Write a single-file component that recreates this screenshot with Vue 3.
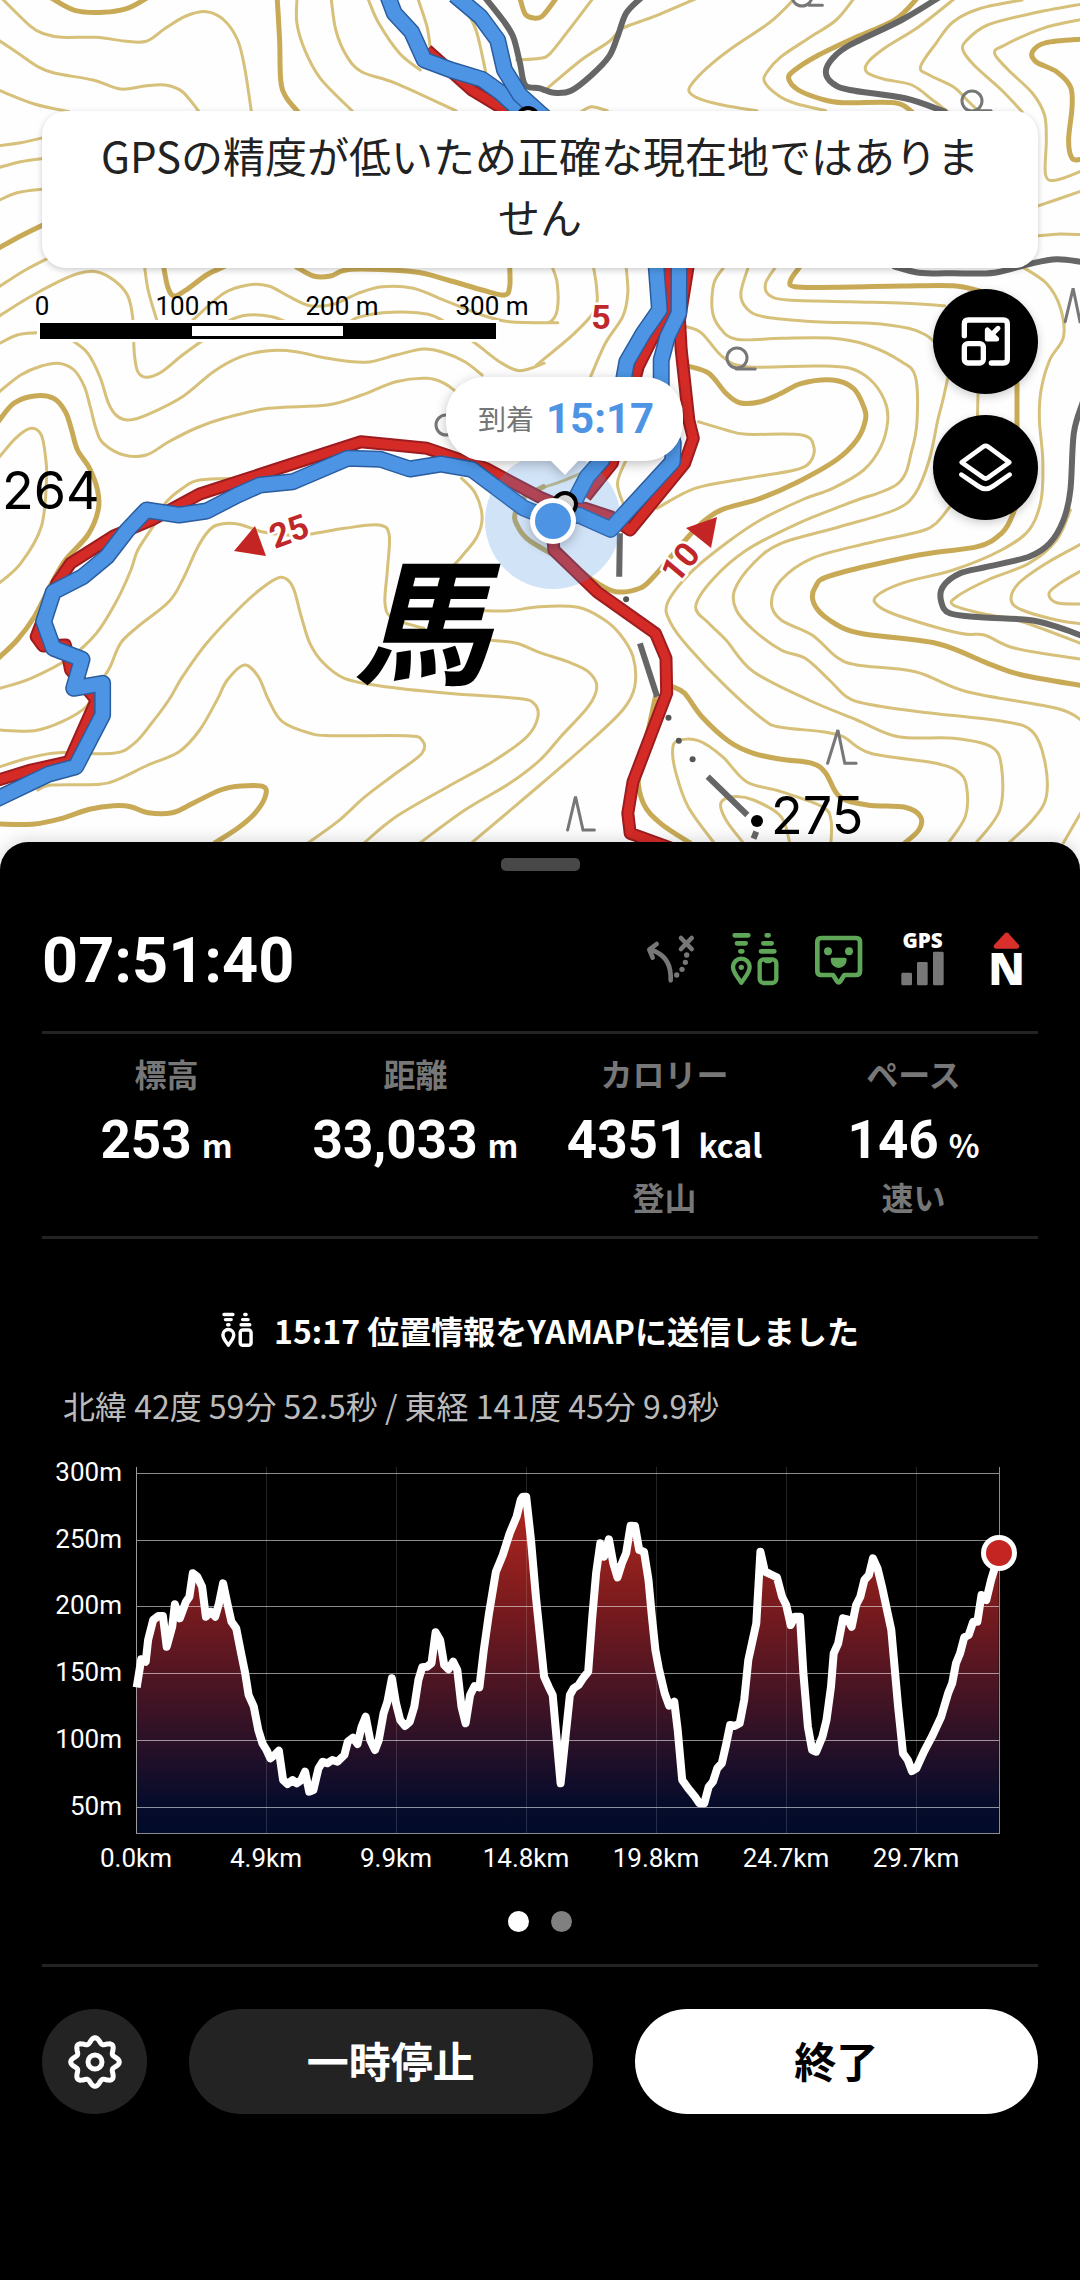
<script setup>
const UNIT_X = 540 / 1568
const UNIT_Y = 1 / 3

const project = (pts, ox = 0, oy = 0) => {
  const out = []
  for (let i = 0; i < pts.length; i += 2) {
    out.push([Math.round((pts[i] + ox) * UNIT_X * 10) / 10, Math.round((pts[i + 1] + oy) * UNIT_Y * 10) / 10])
  }
  return out
}

const polyline = (p) => 'M' + p.map((q) => q.join(' ')).join('L')

// Catmull-Rom spline through the points, as cubic segments
const smooth = (p) => {
  let d = `M${p[0].join(' ')}`
  for (let i = 0; i < p.length - 1; i++) {
    const a = p[i - 1] || p[i]
    const b = p[i]
    const c = p[i + 1]
    const e = p[i + 2] || c
    const n = [b[0] + (c[0] - a[0]) / 6, b[1] + (c[1] - a[1]) / 6, c[0] - (e[0] - b[0]) / 6, c[1] - (e[1] - b[1]) / 6, c[0], c[1]]
    d += 'C' + n.map((v) => v.toFixed(1)).join(' ')
  }
  return d
}

const tiles = [
  {
    x: 0,
    y: 0,
    thin: [
      [10, 0, 90, 80, 130, 102, 180, 112, 280, 112, 360, 123, 425, 124, 480, 85, 540, 48, 600, 35, 650, 60, 690, 120, 710, 200, 730, 335],
      [-5, 120, 60, 165, 110, 200, 160, 220, 270, 240, 350, 267, 420, 258, 480, 255, 530, 275, 578, 335],
      [-5, 270, 100, 312, 200, 335],
      [862, 0, 862, 70, 885, 150, 930, 235, 1025, 335],
      [962, 0, 975, 90, 1005, 165, 1050, 215, 1150, 250, 1325, 333],
      [1070, 0, 1100, 70, 1160, 160, 1220, 210],
      [1215, 0, 1240, 80, 1250, 150],
      [1360, 40, 1385, 100, 1410, 215],
      [1500, 180, 1568, 175, 1598, 160, 1648, 95, 1718, 0],
      [-5, 437, 60, 428, 130, 412],
      [-5, 503, 60, 485, 130, 475],
      [-5, 602, 50, 578, 130, 567],
      [-5, 862, 70, 812, 145, 772],
      [-5, 950, 80, 895, 170, 845, 230, 820, 280, 815, 330, 840, 370, 885, 385, 950, 390, 1060, 400, 1115, 425, 1132, 470, 1115, 530, 1065, 590, 1020, 660, 965, 720, 945, 790, 950, 850, 972, 930, 985, 1000, 972, 1040, 952, 1110, 938, 1210, 938, 1280, 958, 1380, 1030, 1450, 1085, 1510, 1112, 1580, 1090],
      [560, 960, 650, 880, 720, 855, 780, 858, 840, 890, 900, 917, 970, 912, 1040, 880, 1110, 860, 1200, 865, 1300, 905, 1400, 945, 1480, 965, 1620, 968],
      [420, 800, 430, 870, 455, 960],
      [-5, 1032, 50, 1005, 105, 998],
      [215, 1025, 255, 1060, 290, 1130, 315, 1210, 340, 1248, 375, 1260, 430, 1243, 530, 1190, 620, 1115, 700, 1070, 780, 1052, 860, 1055, 950, 1075, 1060, 1087, 1150, 1065, 1230, 1047, 1290, 1058, 1350, 1085, 1400, 1125],
      [-5, 1178, 60, 1125, 120, 1098, 170, 1090, 215, 1110, 245, 1160, 262, 1220, 280, 1290, 300, 1330, 360, 1365, 425, 1365, 490, 1325, 570, 1284, 650, 1255, 780, 1225, 950, 1215, 1050, 1185, 1150, 1145, 1240, 1135, 1290, 1150, 1330, 1180],
    ],
    thick: [
      [150, -5, 220, 32, 300, 37, 370, 25, 425, -5],
      [805, -5, 812, 120, 815, 240, 830, 290, 865, 335],
      [1510, -5, 1525, 42, 1550, 54, 1575, 48, 1615, -5],
      [-5, 745, 60, 708, 130, 672],
      [475, 800, 487, 860, 505, 888, 540, 870, 600, 825, 650, 800],
      [860, 800, 910, 828, 960, 828, 1020, 808, 1200, 815, 1300, 840, 1400, 870, 1465, 885, 1480, 860, 1480, 800],
      [-5, 1265, 40, 1210, 100, 1188, 155, 1195, 190, 1235, 208, 1290, 225, 1350, 260, 1405, 283, 1470, 285, 1530, 255, 1605, 190, 1680, 150, 1750, 100, 1850, 50, 1920, -5, 1975],
    ],
    road: [[1410, -5, 1460, 60, 1490, 110, 1510, 190, 1525, 255, 1568, 265, 1608, 278, 1658, 272, 1718, 225, 1768, 170, 1793, 110, 1818, 40, 1860, -5]],
  },
  {
    x: 1568,
    y: 0,
    thin: [
      [10, 275, 120, 180, 200, 125, 240, 85, 330, 50, 455, -5],
      [120, 335, 150, 320, 195, 332],
      [740, -5, 670, 65, 570, 135, 500, 190, 450, 240, 432, 272, 460, 295, 530, 315, 630, 332],
      [912, -5, 860, 60, 780, 115, 700, 170, 660, 215, 652, 245, 690, 285, 740, 310, 830, 332],
      [1205, -5, 1100, 80, 1000, 145, 950, 190, 950, 218, 1000, 238, 1080, 255, 1140, 300, 1185, 335],
      [1400, 0, 1280, 25, 1200, 65, 1150, 130, 1105, 200, 1130, 225, 1200, 260, 1240, 300, 1275, 335],
      [1575, 12, 1430, 40, 1300, 75, 1240, 120, 1228, 150, 1260, 195, 1340, 270, 1400, 335],
      [1575, 58, 1460, 85, 1350, 135, 1320, 160, 1360, 210, 1430, 280, 1465, 345, 1470, 420, 1468, 525, 1500, 540, 1575, 512],
      [1440, 620, 1575, 572],
      [1440, 708, 1510, 702, 1575, 704],
      [35, 800, 50, 850, 50, 930, 30, 965, -5, 968],
      [155, 800, 165, 870, 160, 930, 100, 1000, -10, 1095],
      [250, 800, 255, 880, 240, 950, 190, 1030, 145, 1135],
      [535, 800, 505, 850, 500, 930, 520, 980, 570, 1018, 700, 1015, 850, 1015, 950, 1035, 1050, 1085, 1090, 1130, 1095, 1260, 1080, 1350, 1040, 1450, 900, 1508, 750, 1570, 600, 1650, 500, 1740, 452, 1820, 490, 1870, 540, 1920, 620, 2015, 780, 2100, 920, 2160, 1040, 2210, 1200, 2215, 1310, 2240, 1340, 2300, 1335, 2430, 1265, 2530],
      [605, 800, 583, 880, 600, 925, 650, 950, 800, 965, 960, 970, 1070, 985, 1120, 1005, 1150, 1030],
      [685, 800, 655, 850, 665, 885, 720, 900, 900, 905, 1060, 910, 1175, 917],
      [425, 980, 470, 1000, 530, 1070, 600, 1100, 800, 1098, 900, 1105, 960, 1140, 1000, 1200, 1010, 1260, 990, 1340, 940, 1410, 850, 1465, 760, 1500, 640, 1560, 540, 1630, 440, 1715, 370, 1810, 380, 1870, 430, 1940, 540, 2060, 650, 2160, 700, 2182, 820, 2195, 880, 2210, 960, 2260, 1150, 2290, 1220, 2320, 1240, 2370, 1235, 2450, 1185, 2530],
      [1185, 1130, 1170, 1200, 1155, 1260, 1130, 1380, 1090, 1480, 1030, 1530, 870, 1580, 700, 1630, 620, 1690, 565, 1770, 570, 1830, 620, 1890, 700, 1950, 770, 1975, 840, 2040, 890, 2090, 950, 2112, 1100, 2135, 1350, 2165, 1430, 2195, 1465, 2280, 1470, 2390, 1430, 2460, 1360, 2530],
      [1272, 1170, 1270, 1260],
      [1400, 800, 1470, 850, 1510, 920, 1520, 1010, 1480, 1080, 1455, 1170, 1450, 1260, 1460, 1380, 1455, 1500, 1420, 1590, 1340, 1650, 1200, 1710, 1050, 1750, 975, 1790, 985, 1820, 1050, 1850, 1220, 1900, 1290, 1905, 1380, 1945, 1575, 1978],
    ],
    thick: [
      [1095, -5, 1030, 60, 900, 120, 800, 170, 740, 210, 722, 235, 750, 270, 820, 298, 880, 308, 1030, 308, 1080, 335],
      [1575, 117, 1470, 128, 1430, 155, 1440, 185, 1500, 215, 1540, 260, 1545, 320, 1535, 420, 1545, 475, 1575, 478],
      [755, 800, 728, 840, 740, 860, 850, 862, 1050, 858, 1200, 857, 1275, 872],
      [430, 1098, 490, 1120, 540, 1180, 580, 1208, 640, 1205, 700, 1180, 760, 1150, 850, 1140, 910, 1165, 940, 1220, 945, 1260, 920, 1320, 860, 1380, 750, 1445, 640, 1495, 530, 1528, 480, 1560, 440, 1600, 380, 1670, 330, 1730, 290, 1765, 220, 1775, 160, 1745, 100, 1700, -30, 1622, -68, 1572, -72, 1540, -50, 1495, 10, 1460],
      [1385, 1150, 1385, 1260, 1385, 1480, 1370, 1550, 1340, 1600, 1270, 1640, 1100, 1665, 850, 1725, 800, 1760, 795, 1810, 840, 1860, 930, 1900, 1150, 1930, 1300, 1990, 1400, 2025, 1575, 2057],
    ],
    road: [
      [1155, -5, 1050, 60, 900, 135, 850, 175, 830, 215, 850, 250, 900, 270, 1060, 295, 1175, 335],
      [1030, 800, 1100, 818, 1200, 820, 1320, 818, 1420, 792, 1500, 778, 1575, 786],
      [1575, 1210, 1550, 1300, 1540, 1470, 1520, 1560, 1480, 1630, 1420, 1670, 1300, 1700, 1220, 1720, 1170, 1760, 1165, 1805, 1190, 1840, 1280, 1852, 1420, 1860, 1500, 1880, 1575, 1908],
    ],
  },
  {
    x: 0,
    y: 1260,
    thin: [
      [-5, 115, 45, 55, 90, 25, 120, 45, 132, 110, 135, 180, 120, 320, 60, 430, -5, 492],
      [-5, 806, 90, 775, 200, 715, 280, 640, 340, 540, 380, 450, 400, 390, 450, 310, 480, 250, 530, 205, 580, 180, 700, 175],
      [-5, 930, 100, 932, 180, 905, 250, 860, 290, 790, 320, 740, 350, 670, 400, 620, 490, 545, 530, 480, 570, 390, 600, 340, 630, 315, 690, 312, 760, 335, 830, 345, 900, 342, 1000, 325, 1100, 315, 1130, 345, 1125, 450, 1118, 550, 1140, 595, 1230, 625],
      [1400, 572, 1480, 572, 1568, 560, 1678, 562, 1748, 595, 1798, 640, 1838, 710, 1843, 800, 1808, 870, 1718, 960, 1568, 1095, 1370, 1268],
      [1340, 175, 1380, 220, 1400, 290, 1385, 350, 1340, 410, 1280, 480, 1275, 520],
      [1420, 660, 1500, 670, 1568, 698, 1648, 725, 1708, 755, 1733, 800, 1708, 860, 1628, 950, 1568, 1020, 1480, 1090, 1350, 1170, 1220, 1268],
      [-5, 1042, 80, 1015, 170, 998, 330, 1000, 390, 970, 440, 910, 490, 840, 530, 770, 600, 670, 690, 570, 760, 505, 815, 472, 850, 500, 875, 590, 900, 670, 940, 730, 1000, 775, 1100, 797, 1300, 820, 1500, 835, 1550, 850, 1562, 890, 1530, 950, 1430, 1025, 1300, 1100, 1150, 1190, 1058, 1268],
      [110, 1110, 150, 1095, 290, 1093, 350, 1075, 430, 1035, 520, 995, 580, 930, 630, 840, 660, 780, 710, 735, 750, 770, 780, 840, 820, 905, 900, 940, 960, 947, 1180, 947, 1225, 960, 1225, 1000, 1150, 1060, 1060, 1130, 980, 1205, 895, 1268],
    ],
    thick: [[-5, 1212, 100, 1212, 180, 1195, 260, 1168, 330, 1157, 380, 1160, 430, 1178, 500, 1178, 560, 1150, 640, 1110, 700, 1098, 765, 1100, 770, 1130, 740, 1180, 690, 1225, 625, 1268]],
    road: [],
  },
  {
    x: 1568,
    y: 1260,
    thin: [
      [460, 5, 540, 30, 600, 43, 760, 45, 795, 80, 785, 125, 740, 150, 600, 175, 450, 205, 340, 265],
      [250, 120, 225, 190, 245, 260],
      [0, 205, 60, 185, 130, 155],
      [1190, 260, 1150, 310, 1100, 335, 950, 370, 790, 415, 700, 480, 672, 550, 700, 600, 790, 645, 860, 710, 920, 735, 1090, 755, 1240, 815, 1500, 865, 1575, 903],
      [1540, 270, 1500, 360, 1420, 430, 1300, 480, 1210, 530, 1200, 555, 1280, 580, 1400, 605, 1575, 672],
      [1575, 370, 1470, 430, 1390, 490, 1368, 540, 1400, 570, 1500, 600, 1575, 612],
      [1575, 450, 1510, 490, 1478, 520, 1500, 548, 1575, 552],
      [505, 1268, 430, 1160, 395, 1060, 385, 990, 400, 962, 460, 962, 530, 1010, 600, 1085, 700, 1115, 820, 1160, 845, 1200, 845, 1268],
      [590, 1268, 540, 1200, 525, 1150, 560, 1130, 620, 1140, 700, 1190, 725, 1268],
      [1575, 1170, 1520, 1268],
    ],
    thick: [
      [385, 800, 420, 820, 470, 890, 550, 965, 620, 1000, 700, 1018, 790, 1030, 830, 1060, 870, 1130, 950, 1155, 1060, 1162, 1105, 1190, 1100, 1230, 1060, 1268],
      [335, 830, 310, 950, 285, 1060, 300, 1150, 350, 1210, 435, 1268],
    ],
    road: [],
  },
]

const layer = (kind) => tiles.map((t) => t[kind].map((l) => smooth(project(l, t.x, t.y))).join('')).join('')
const thinLines = layer('thin')
const thickLines = layer('thick')
const roadLines = layer('road')

const symbols = [
  [2403, 2290, 2433, 2190, 2453, 2290, 2486, 2290],
  [1648, 2490, 1671, 2390, 1693, 2490, 1726, 2490],
  [3093, 965, 3116, 865, 3136, 965, 3150, 965],
  [2138, 1107, 2193, 1107],
  [2838, 332, 2878, 332],
  [2350, 16, 2388, 16],
].map((s) => polyline(project(s))).join('')

const boundary = [
  [1800, 1600, 1798, 1730],
  [1858, 1930, 1908, 2090],
  [2055, 2330, 2170, 2445],
  [2196, 2495, 2188, 2516],
].map((s) => polyline(project(s))).join('')
const boundaryDots = project([1818, 1798, 1941, 2153, 1971, 2222, 2011, 2278])

const plan = [
  [1240, 150, 1370, 270, 1490, 345],
  [1998, 800, 1973, 960, 1978, 1050, 2000, 1260, 2013, 1315, 1988, 1390, 1830, 1590, 1773, 1550, 1698, 1525, 1630, 1530],
  [1940, 800, 1935, 930, 1853, 1100, 1778, 1390, 1700, 1490],
  [1620, 1515, 1568, 1492, 1410, 1405, 1240, 1345, 1048, 1325, 810, 1405, 580, 1482, 440, 1560, 330, 1608, 205, 1690, 165, 1750, 105, 1910, 125, 1938, 190, 1935, 205, 2010, 280, 2100, 200, 2285, 90, 2310, -20, 2345],
  [1605, 1600, 1608, 1650, 1733, 1775, 1903, 1900, 1934, 1975, 1936, 2080, 1838, 2345, 1823, 2440, 1830, 2500, 1990, 2560],
].map((s) => polyline(project(s))).join('')

const walked = [
  [1125, -15, 1145, 40, 1195, 95, 1232, 180, 1310, 210, 1400, 238, 1450, 275, 1540, 360, 1904, 780, 1915, 930, 1868, 1000, 1820, 1085, 1800, 1200, 1748, 1380, 1705, 1430, 1670, 1500],
  [1320, -15, 1395, 50, 1445, 120, 1465, 210, 1510, 285, 1580, 350, 1972, 780, 1971, 940, 1938, 1010, 1920, 1080, 1920, 1200, 1955, 1330, 1953, 1385, 1773, 1588, 1680, 1545, 1605, 1560, 1520, 1524, 1370, 1408, 1280, 1392, 1190, 1407, 1105, 1378, 1010, 1375, 850, 1445, 755, 1455, 690, 1485, 600, 1533, 520, 1545, 425, 1530, 370, 1590, 310, 1670, 240, 1730, 155, 1775, 127, 1865, 155, 1945, 238, 1978, 214, 2065, 298, 2050, 298, 2145, 220, 2300, 140, 2323, -20, 2402],
].map((s) => polyline(project(s)))

const scaleMarks = ['0', '100 m', '200 m', '300 m']

const stats = [
  { label: '標高', value: '253', unit: 'm', note: '' },
  { label: '距離', value: '33,033', unit: 'm', note: '' },
  { label: 'カロリー', value: '4351', unit: 'kcal', note: '登山' },
  { label: 'ペース', value: '146', unit: '%', note: '速い' },
]

const profileSamples = [
  397, 742, 410, 658, 423, 665, 430, 600, 445, 540, 460, 528, 473, 528, 484, 620, 500, 560, 508, 493, 522, 535, 540, 485, 550, 470, 560, 400,
  573, 410, 587, 440, 598, 530, 612, 515, 625, 530, 636, 490, 648, 430, 660, 490, 672, 545, 686, 565, 700, 640, 712, 700, 722, 765, 737, 800,
  750, 870, 762, 910, 774, 930, 785, 955, 797, 945, 810, 932, 822, 1020, 835, 1032, 850, 1020, 862, 1030, 875, 1020, 886, 995, 898, 1055,
  910, 1050, 925, 985, 937, 965, 950, 970, 965, 960, 980, 965, 1000, 945, 1010, 905, 1025, 893, 1038, 912, 1050, 860, 1062, 830, 1075, 900,
  1089, 930, 1100, 900, 1114, 820, 1125, 785, 1138, 715, 1150, 790, 1162, 840, 1176, 858, 1190, 845, 1203, 800, 1215, 720, 1226, 682,
  1240, 680, 1253, 670, 1265, 577, 1278, 600, 1290, 675, 1302, 688, 1316, 665, 1328, 690, 1340, 800, 1352, 850, 1365, 765, 1378, 738,
  1392, 742, 1405, 630, 1420, 520, 1440, 395, 1460, 345, 1480, 280, 1500, 230, 1512, 180, 1518, 170, 1528, 170, 1542, 300, 1556, 470,
  1568, 590, 1580, 710, 1593, 740, 1605, 765, 1628, 1030, 1655, 765, 1666, 745, 1680, 735, 1693, 715, 1708, 695, 1720, 530, 1731, 400,
  1743, 310, 1754, 350, 1768, 298, 1781, 370, 1793, 412, 1806, 370, 1818, 340, 1831, 257, 1844, 258, 1856, 330, 1870, 335, 1883, 420,
  1893, 530, 1903, 630, 1913, 685, 1930, 760, 1943, 797, 1958, 785, 1968, 870, 1981, 1020, 1998, 1045, 2018, 1070, 2031, 1090, 2045, 1090,
  2058, 1040, 2070, 1025, 2083, 985, 2096, 970, 2108, 915, 2120, 855, 2133, 858, 2148, 850, 2161, 780, 2173, 660, 2196, 550, 2208, 335,
  2221, 395, 2236, 402, 2256, 412, 2271, 470, 2283, 495, 2296, 555, 2308, 530, 2323, 530, 2333, 700, 2346, 860, 2358, 930, 2370, 935,
  2388, 890, 2400, 840, 2413, 740, 2421, 640, 2434, 610, 2448, 535, 2461, 538, 2473, 560, 2486, 495, 2498, 470, 2510, 420, 2523, 405,
  2535, 355, 2548, 385, 2561, 440, 2588, 570, 2608, 800, 2622, 940, 2636, 960, 2648, 993, 2661, 985, 2683, 935, 2706, 890, 2733, 830,
  2753, 760, 2765, 730, 2776, 670, 2788, 640, 2800, 592, 2813, 585, 2826, 545, 2838, 545, 2850, 465, 2864, 480, 2878, 420, 2900, 345,
]
const profile = polyline(project(profileSamples, -122, -45))
const profileArea = `${profile}V378H95Z`
const heights = [300, 250, 200, 150, 100, 50].map((m, i) => ({ text: `${m}m`, y: Math.round(18 + i * 66.7) }))
const distances = ['0.0km', '4.9km', '9.9km', '14.8km', '19.8km', '24.7km', '29.7km'].map((text, i) => ({ text, x: 94 + i * 130 }))

const gear = (() => {
  const pts = []
  for (let a = 0; a < 360; a += 3) {
    const t = (a * Math.PI) / 180
    const r = 21.6 + 2.7 * Math.cos(8 * t)
    pts.push([(r * Math.cos(t)).toFixed(1), (r * Math.sin(t)).toFixed(1)])
  }
  return polyline(pts) + 'Z'
})()
</script>

<template>
  <main class="screen">
    <section class="map">
      <svg class="map-canvas" viewBox="0 0 1080 874" preserveAspectRatio="xMidYMin slice" aria-label="地図">
        <g fill="none" stroke-linecap="round">
          <path class="contour" :d="thinLines" />
          <path class="contour index" :d="thickLines" />
          <path class="road" :d="roadLines" />
          <path class="symbol" :d="symbols" />
          <circle class="symbol" cx="737" cy="358" r="10" />
          <circle class="symbol" cx="972" cy="101" r="10" />
          <circle class="symbol" cx="446" cy="425" r="10" />
          <circle class="symbol" cx="802" cy="-4" r="10" />
          <path class="boundary" :d="boundary" />
        </g>
        <circle v-for="(p, i) in boundaryDots" :key="i" :cx="p[0]" :cy="p[1]" r="3" fill="#555" />
        <circle cx="757" cy="821" r="6" />
        <text class="spot" x="2" y="509">264</text>
        <text class="spot" x="771" y="834">275</text>
        <text class="place" x="354" y="674">馬</text>

        <g fill="none" stroke-linejoin="round">
          <path :d="plan" stroke="#9c1c1f" stroke-width="13" />
          <path :d="plan" stroke="#d52b26" stroke-width="9" />
          <template v-for="(w, i) in walked" :key="i">
            <path :d="w" stroke="#2a5c9f" stroke-width="17" />
            <path :d="w" stroke="#4d95e4" stroke-width="14" />
          </template>
        </g>
        <circle class="node" cx="528" cy="118" r="10" />

        <circle cx="553" cy="521" r="68" fill="#4d95e4" fill-opacity=".25" />
        <circle class="node" cx="565" cy="504" r="11" />
        <circle class="lifted" cx="553" cy="521" r="23" fill="#fff" />
        <circle cx="553" cy="521" r="18" fill="#4d95e4" />

        <path class="arrow" d="M255 526 234 551 266 556Z" />
        <text class="minutes" transform="translate(289 531) rotate(-20)" y="12">25</text>
        <path class="arrow" d="M686 528 717 517 711 548Z" />
        <text class="minutes" transform="translate(680 562) rotate(-50)" y="12">10</text>
        <text class="minutes" x="601" y="329">5</text>

        <path class="lifted" fill="#fff" d="M484 377H645A38 38 0 0 1 683 415V423A38 38 0 0 1 645 461H578L565 475 551 461H484A38 38 0 0 1 446 423V415A38 38 0 0 1 484 377Z" />
        <text class="arrive" x="478" y="430">到着</text>
        <text class="arrive-time" x="546" y="433">15:17</text>
      </svg>

      <div class="overlay">
        <p class="notice" role="status">GPSの精度が低いため正確な現在地ではありません</p>
        <div class="tools">
          <svg class="scale" viewBox="0 0 456 50" aria-label="縮尺">
            <rect x="-5" y="31" width="462" height="22" fill="#fff" />
            <rect x="-2" y="34" width="456" height="16" />
            <rect x="150" y="37" width="151" height="10" fill="#fff" />
            <text v-for="(m, i) in scaleMarks" :key="m" :x="i * 150" y="26">{{ m }}</text>
          </svg>
          <div class="map-buttons">
            <button type="button" aria-label="縮小表示">
              <svg viewBox="69 57 315 315" fill="none" stroke="#fff" stroke-width="16" stroke-linecap="round" stroke-linejoin="round">
                <path d="M163 197V162Q163 150 175 150H280Q292 150 292 162V267Q292 279 280 279H244" />
                <rect x="163" y="221" width="57" height="58" rx="11" />
                <path d="M264 175 236 203M232 180V207H260Z" stroke-width="15" />
              </svg>
            </button>
            <button type="button" aria-label="レイヤー">
              <svg viewBox="69 435 315 315" fill="none" stroke="#fff" stroke-width="14" stroke-linecap="round" stroke-linejoin="round">
                <path d="M220 530Q227 525 234 530L298 577 234 623Q227 628 220 623L155 577Z" />
                <path d="M154 614 204 648Q227 665 250 648L299 614" />
              </svg>
            </button>
          </div>
        </div>
      </div>
    </section>

    <section class="sheet">
      <div class="handle"></div>
      <header class="status">
        <time class="timer">07:51:40</time>
        <div class="indicators">
          <svg viewBox="57 82 189 189" fill="none" stroke="#777" stroke-width="14" stroke-linecap="round" stroke-linejoin="round" aria-label="ルート">
            <path d="M152 239V225Q150 165 92 147M110 130 88 147 98 171" />
            <path d="M183 112 215 145M215 112 183 145" />
            <path d="M200 163h.1M196 185h.1M186 206h.1M170 223h.1" stroke-width="16" />
          </svg>
          <svg viewBox="309 82 189 189" fill="none" stroke="#5fa659" stroke-width="13" stroke-linecap="round" stroke-linejoin="round" aria-label="位置共有">
            <path d="M344 104H385M351 128H377M361 152H367M440 104H446M430 128H455M423 152H463" stroke-width="14" />
            <path d="M364 246C350 226 339 215 339 199A25 25 0 0 1 389 199C389 215 378 226 364 246Z" />
            <circle cx="364" cy="200" r="8" fill="#5fa659" stroke="none" />
            <rect x="419" y="176" width="50" height="71" rx="12" />
            <path d="M438 181H450" />
          </svg>
          <svg viewBox="561 82 189 189" fill="none" stroke="#5fa659" stroke-width="14" stroke-linecap="round" stroke-linejoin="round" aria-label="メッセージ">
            <path d="M604 112H708Q720 112 720 124V211Q720 223 708 223H673L661 242Q656 248 651 242L639 223H604Q592 223 592 211V124Q592 112 604 112Z" />
            <g fill="#5fa659" stroke="none">
              <circle cx="624" cy="152" r="12" />
              <circle cx="687" cy="152" r="12" />
              <path d="M636 171H675Q680 171 680 177A24 25 0 0 1 632 177Q632 171 636 171Z" />
            </g>
          </svg>
          <svg viewBox="813 82 189 189" aria-label="GPS感度">
            <text class="glyph" x="908" y="143" font-size="62">GPS</text>
            <g fill="#777">
              <rect x="844" y="216" width="32" height="38" rx="4" />
              <rect x="891" y="184" width="32" height="70" rx="4" />
              <rect x="939" y="153" width="32" height="101" rx="4" />
            </g>
          </svg>
          <svg viewBox="1065 82 189 189" aria-label="方位">
            <path d="M1155 98Q1160 93 1165 98L1196 132Q1201 143 1190 144H1128Q1117 143 1123 132Z" fill="#d9302b" />
            <text class="glyph" x="1160" y="254" font-size="132">N</text>
          </svg>
        </div>
      </header>

      <dl class="stats">
        <div v-for="s in stats" :key="s.label" class="stat">
          <dt>{{ s.label }}</dt>
          <dd class="value"><b>{{ s.value }}</b><span>{{ s.unit }}</span></dd>
          <dd v-if="s.note" class="note">{{ s.note }}</dd>
        </div>
      </dl>

      <p class="sent">
        <svg viewBox="330 94 148 164" fill="none" stroke="#fff" stroke-width="16" stroke-linecap="round" stroke-linejoin="round">
          <path d="M344 104H385M351 128H377M361 152H367M440 104H446M430 128H455M423 152H463" />
          <path d="M364 246C350 226 339 215 339 199A25 25 0 0 1 389 199C389 215 378 226 364 246Z" />
          <rect x="419" y="176" width="50" height="71" rx="12" />
        </svg>
        <span>15:17 位置情報をYAMAPに送信しました</span>
      </p>
      <p class="position">北緯 42度 59分 52.5秒 / 東経 141度 45分 9.9秒</p>

      <svg class="chart" viewBox="0 0 996 424" aria-label="標高グラフ">
        <defs>
          <linearGradient id="relief" gradientUnits="userSpaceOnUse" x1="0" y1="40" x2="0" y2="378">
            <stop offset="0" stop-color="#b5271d" />
            <stop offset=".35" stop-color="#751a1e" />
            <stop offset=".9" stop-color="#080c2b" />
            <stop offset="1" stop-color="#020b2a" />
          </linearGradient>
        </defs>
        <path :d="profileArea" fill="url(#relief)" />
        <g shape-rendering="crispEdges">
          <line v-for="h in heights" :key="h.text" x1="95" x2="957" :y1="h.y" :y2="h.y" class="grid" />
          <line v-for="k in distances" :key="k.text" :x1="k.x" :x2="k.x" y1="12" y2="378" class="grid faint" />
          <path d="M94 12V378H957V12" class="grid" />
        </g>
        <path :d="profile" fill="none" stroke="#fff" stroke-width="8" stroke-linejoin="round" />
        <circle cx="957" cy="98" r="18" fill="#fff" />
        <circle cx="957" cy="98" r="13" fill="#c52522" />
        <g class="axis">
          <text v-for="h in heights" :key="h.text" x="80" :y="h.y + 8" text-anchor="end">{{ h.text }}</text>
          <text v-for="k in distances" :key="k.text" :x="k.x" y="412" text-anchor="middle">{{ k.text }}</text>
        </g>
      </svg>

      <div class="pager"><i class="on"></i><i></i></div>

      <footer class="actions">
        <button type="button" class="settings" aria-label="設定">
          <svg viewBox="-27 -27 54 54" fill="none" stroke="#fff" stroke-width="5" stroke-linejoin="round">
            <path :d="gear" />
            <circle r="7" />
          </svg>
        </button>
        <button type="button" class="pause">一時停止</button>
        <button type="button" class="finish">終了</button>
      </footer>
    </section>
  </main>
</template>

<style>
body {
  background: #000;
}
</style>

<style scoped>
.screen {
  display: flex;
  flex-direction: column;
  min-height: 100vh;
  font-family: "Noto Sans CJK JP", sans-serif;
  color: #fff;
}

p,
dl,
dd {
  margin: 0;
}

button {
  border: 0;
  padding: 0;
  font: inherit;
  color: inherit;
}

.map {
  position: relative;
  flex: 1;
  background: #fefefe;
  color: #000;
}

.map-canvas {
  position: absolute;
  inset: 0;
  width: 100%;
  height: 100%;
}

.contour {
  stroke: #d6c07a;
  stroke-width: 3;
}

.contour.index {
  stroke: #c8aa56;
  stroke-width: 5;
}

.road {
  stroke: #666;
  stroke-width: 6;
}

.symbol {
  stroke: #777;
  stroke-width: 3;
}

.boundary {
  stroke: #666;
  stroke-width: 6;
  stroke-linecap: butt;
}

.node {
  fill: #ddd;
  stroke: #000;
  stroke-width: 4;
}

.lifted {
  filter: drop-shadow(0 3px 6px rgba(0, 0, 0, 0.25));
}

.spot {
  font: 52px Inter, sans-serif;
}

.place {
  font: italic bold 136px "Noto Sans CJK JP", sans-serif;
}

.arrow {
  fill: #c32524;
}

.minutes {
  font: bold 34px Roboto, sans-serif;
  fill: #c0272a;
  stroke: #fff;
  stroke-width: 5;
  paint-order: stroke;
  text-anchor: middle;
}

.arrive {
  font-size: 28px;
  fill: #757575;
}

.arrive-time {
  font: bold 42px Roboto, sans-serif;
  fill: #4d95e4;
}

.overlay {
  position: relative;
  display: flex;
  flex-direction: column;
  gap: 21px;
  padding: 111px 42px 80px;
}

.notice {
  padding: 13px 42px 22px;
  border-radius: 24px;
  background: #fff;
  box-shadow: 0 2px 6px rgba(0, 0, 0, 0.2);
  font-size: 42px;
  line-height: 61px;
  text-align: center;
  color: #222;
}

.tools {
  display: flex;
  justify-content: space-between;
  align-items: flex-start;
}

.scale {
  width: 456px;
  height: 50px;
  overflow: visible;
  font: 26px Roboto, sans-serif;
  text-anchor: middle;
}

.map-buttons {
  display: flex;
  flex-direction: column;
  gap: 21px;
}

.map-buttons button {
  width: 105px;
  height: 105px;
  border-radius: 50%;
  background: #000;
  box-shadow: 0 3px 10px rgba(0, 0, 0, 0.2);
}

.map-buttons svg {
  display: block;
}

.sheet {
  position: relative;
  margin-top: -32px;
  padding: 16px 42px 166px;
  border-radius: 28px 28px 0 0;
  background: #000;
  box-shadow: 0 -2px 16px rgba(0, 0, 0, 0.15);
}

.handle {
  width: 79px;
  height: 13px;
  margin: 0 auto;
  border-radius: 5px;
  background: #484848;
}

.status {
  display: flex;
  justify-content: space-between;
  align-items: center;
  padding: 54px 0 38px;
}

.timer {
  margin-top: 4px;
  font: bold 63px/64px Roboto, sans-serif;
}

.indicators {
  display: flex;
  gap: 21px;
}

.indicators svg {
  width: 63px;
  height: 63px;
  overflow: visible;
}

.glyph {
  font-family: "Open Sans", sans-serif;
  font-weight: 800;
  fill: #fff;
  text-anchor: middle;
}

.stats {
  display: grid;
  grid-template-columns: repeat(4, 1fr);
  padding: 19px 0 20px;
  border-top: 3px solid #232323;
  border-bottom: 3px solid #232323;
  text-align: center;
  font-size: 32px;
  line-height: 40px;
}

.stat {
  display: flex;
  flex-direction: column;
}

.stat dt,
.note {
  font-weight: 700;
  color: #777;
}

.value {
  display: flex;
  justify-content: center;
  align-items: baseline;
  gap: 10px;
  height: 64px;
  margin: 15px 0 4px;
}

.value b {
  font: bold 53px/64px Roboto, sans-serif;
}

.value span {
  font-weight: 700;
}

.sent {
  display: flex;
  justify-content: center;
  align-items: center;
  gap: 21px;
  margin-top: 71px;
  font-size: 32px;
  font-weight: 700;
  line-height: 40px;
}

.sent svg {
  width: 32px;
  height: 36px;
}

.position {
  margin-top: 35px;
  padding-left: 21px;
  font-size: 32px;
  line-height: 40px;
  color: #bbb;
}

.chart {
  display: block;
  width: 100%;
  margin-top: 30px;
  overflow: visible;
}

.grid {
  fill: none;
  stroke: #fff;
  stroke-opacity: 0.55;
}

.faint {
  stroke-opacity: 0.14;
}

.axis {
  font: 26px Roboto, sans-serif;
  fill: #fff;
}

.pager {
  display: flex;
  justify-content: center;
  gap: 22px;
  margin: 32px 0;
}

.pager i {
  width: 21px;
  height: 21px;
  border-radius: 50%;
  background: #808080;
}

.pager .on {
  background: #fff;
}

.actions {
  display: flex;
  gap: 42px;
  padding-top: 42px;
  border-top: 3px solid #232323;
}

.actions button {
  height: 105px;
  padding-bottom: 4px;
  border-radius: 53px;
  font-size: 42px;
  font-weight: 700;
}

.actions .settings {
  display: flex;
  justify-content: center;
  align-items: center;
  width: 105px;
  padding-bottom: 0;
}

.settings svg {
  width: 54px;
  height: 54px;
}

.settings,
.pause {
  background: #232323;
}

.pause,
.finish {
  flex: 1;
}

.actions .finish {
  background: #fff;
  color: #000;
}
</style>
